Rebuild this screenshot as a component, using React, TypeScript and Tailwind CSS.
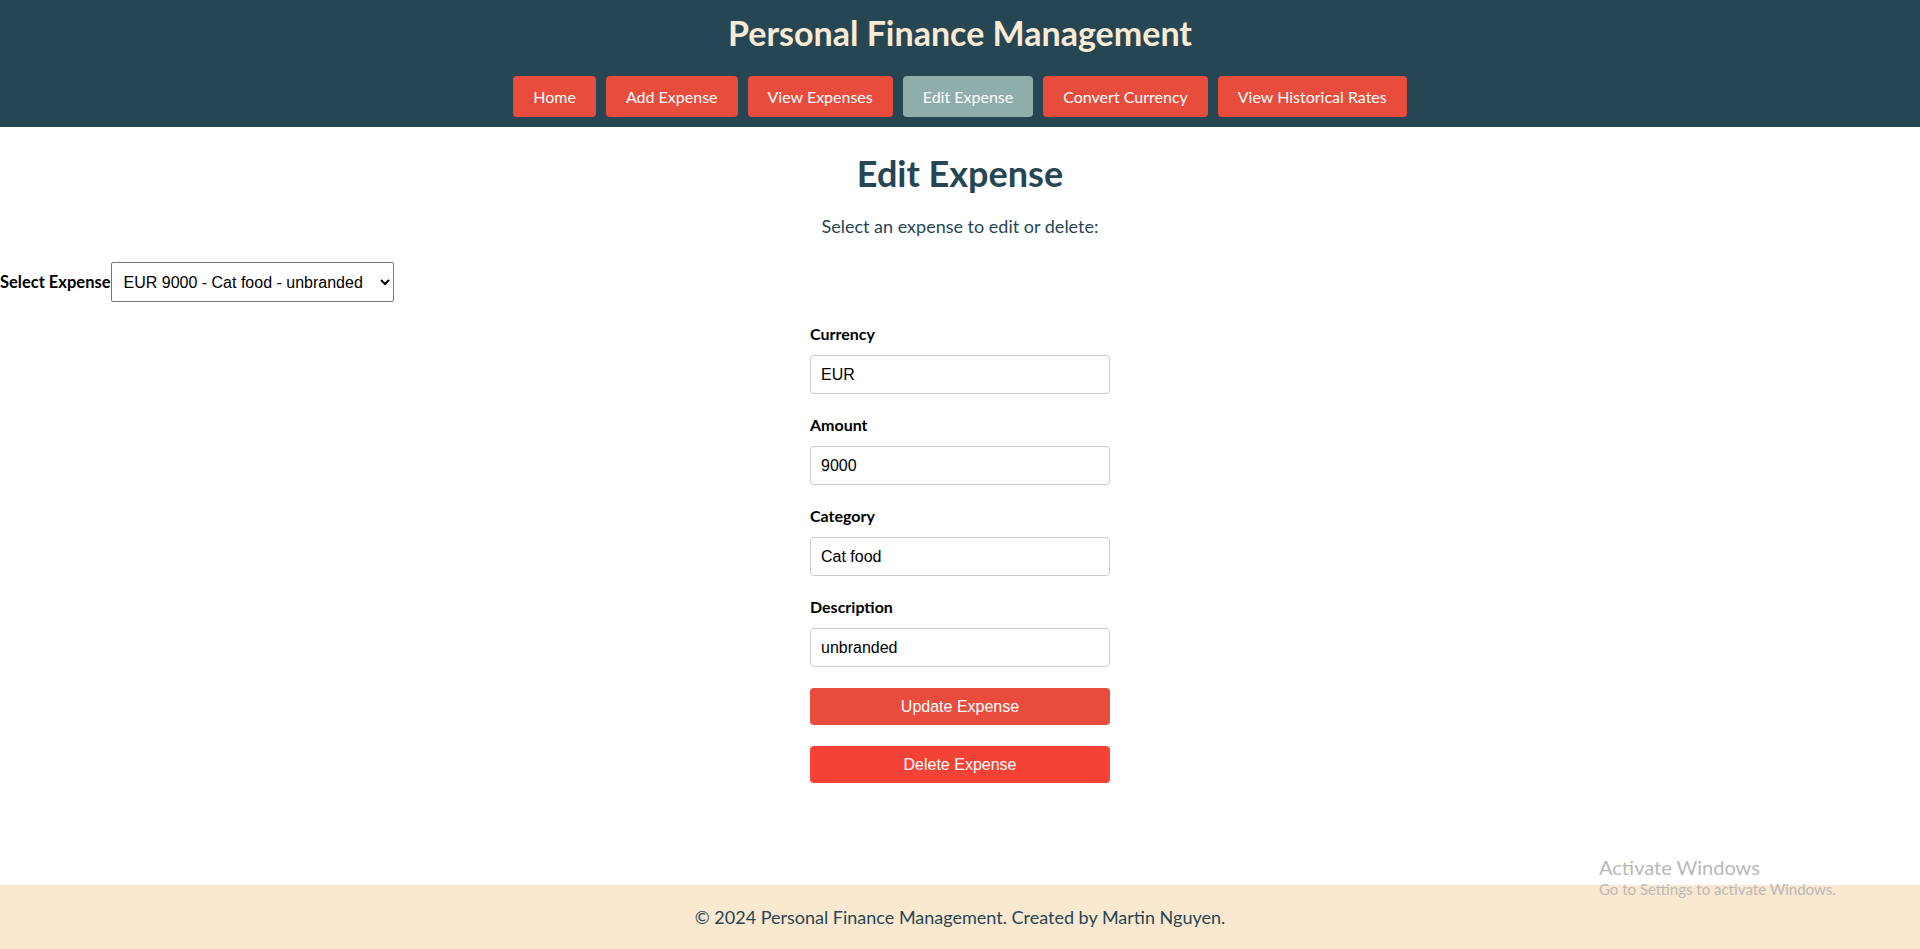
import { useState } from "react";

const navItems = [
  "Home",
  "Add Expense",
  "View Expenses",
  "Edit Expense",
  "Convert Currency",
  "View Historical Rates",
];

const fields = [
  { label: "Currency", key: "currency" },
  { label: "Amount", key: "amount" },
  { label: "Category", key: "category" },
  { label: "Description", key: "description" },
] as const;

export default function App() {
  const [expense, setExpense] = useState({
    currency: "EUR",
    amount: "9000",
    category: "Cat food",
    description: "unbranded",
  });

  return (
    <div className="min-h-screen flex flex-col bg-white font-['Lato','Open_Sans',sans-serif] relative">
      <header className="bg-[#264653] pt-[14px] pb-[10px] text-center">
        <h1 className="text-[34px] leading-[38px] font-bold text-[#faebd7]">
          Personal Finance Management
        </h1>
        <nav className="mt-6 flex justify-center gap-[10px]">
          {navItems.map((item) => (
            <a
              key={item}
              href="#"
              className={`h-[41px] px-5 flex items-center rounded text-[16px] text-white ${
                item === "Edit Expense" ? "bg-[#8fadaa]" : "bg-[#e74c3c]"
              }`}
            >
              {item}
            </a>
          ))}
        </nav>
      </header>

      <main className="flex-1">
        <h2 className="mt-[27px] text-center text-[36px] leading-[38px] font-bold text-[#264653]">
          Edit Expense
        </h2>
        <p className="mt-[22px] text-center text-[18px] leading-[24px] text-[#264653]">
          Select an expense to edit or delete:
        </p>

        <div className="mt-6 flex items-center h-10">
          <label className="text-[16.5px] font-bold text-black">Select Expense</label>
          <select className="h-10 w-[283px] px-2 border border-[#767676] rounded-[2px] bg-white text-[16px] text-black font-['Liberation_Sans',Arial,sans-serif]">
            <option>EUR 9000 - Cat food - unbranded</option>
          </select>
        </div>

        <form className="mx-auto mt-[22px] w-[300px]" onSubmit={(e) => e.preventDefault()}>
          {fields.map((f) => (
            <div key={f.key} className="mb-[21px]">
              <label className="block h-5 leading-5 mb-[11px] text-[16px] font-bold text-black">
                {f.label}
              </label>
              <input
                value={expense[f.key]}
                onChange={(e) => setExpense({ ...expense, [f.key]: e.target.value })}
                className="block w-full h-[39px] px-[10px] border border-[#cccccc] rounded text-[16px] text-black font-['Liberation_Sans',Arial,sans-serif]"
              />
            </div>
          ))}
          <button className="block w-full h-[37px] rounded bg-[#e74c3c] text-white text-[16px] font-['Liberation_Sans',Arial,sans-serif]">
            Update Expense
          </button>
          <button className="block w-full h-[37px] mt-[21px] rounded bg-[#f44336] text-white text-[16px] font-['Liberation_Sans',Arial,sans-serif]">
            Delete Expense
          </button>
        </form>
      </main>

      <footer className="h-16 bg-[#fae8d0] flex items-center justify-center text-[18px] text-[#264653]">
        © 2024 Personal Finance Management. Created by Martin Nguyen.
      </footer>

      <div className="absolute left-[1599px] top-[854px] text-[#b9b9b9] pointer-events-none">
        <div className="text-[20px] leading-[26px]">Activate Windows</div>
        <div className="text-[15px] leading-[18px]">Go to Settings to activate Windows.</div>
      </div>
    </div>
  );
}
